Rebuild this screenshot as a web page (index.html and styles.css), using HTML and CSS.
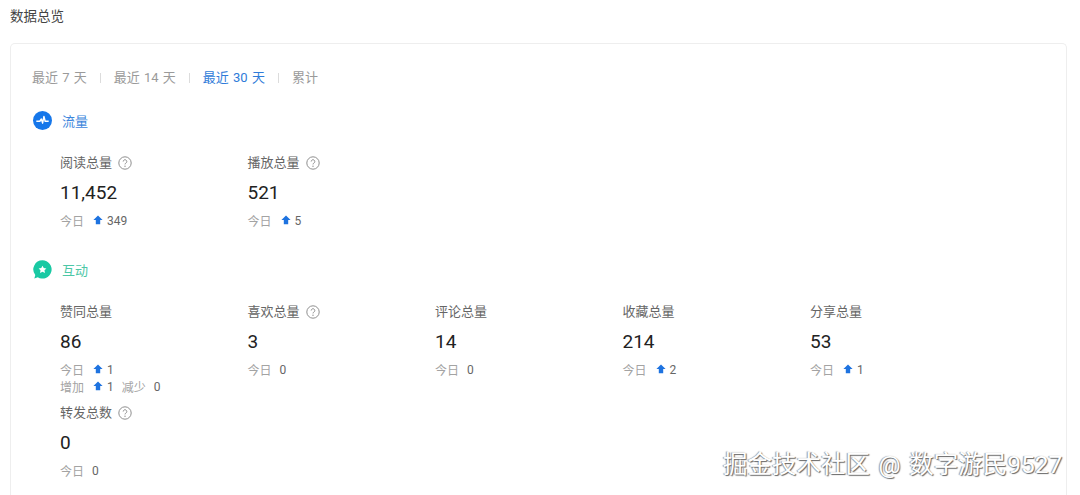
FILE: index.html
```html
<!DOCTYPE html>
<html lang="zh">
<head>
<meta charset="utf-8">
<title>数据总览</title>
<link rel="stylesheet" href="styles.css">
</head>
<body>
<svg class="defs" width="0" height="0" aria-hidden="true">
  <symbol id="help" viewBox="0 0 14 14"><circle cx="7" cy="7" r="6.2" fill="none" stroke="#8f8f8f"/><path d="M5.2 5.5a1.8 1.8 0 1 1 2.7 1.6c-.6.3-.9.6-.9 1.3" fill="none" stroke="#8f8f8f"/><circle cx="7" cy="10.2" r=".7" fill="#8f8f8f"/></symbol>
  <symbol id="up" viewBox="0 0 10 10"><path d="M5 .5 9.6 5H7.2v4.2H2.8V5H.4Z" fill="#1e73e0"/></symbol>
</svg>
<h1 class="page-title">数据总览</h1>
<main class="card">
  <nav class="tabs">
    <span class="tab">最近 7 天</span><i class="sep"></i>
    <span class="tab">最近 14 天</span><i class="sep"></i>
    <span class="tab active">最近 30 天</span><i class="sep"></i>
    <span class="tab">累计</span>
  </nav>

  <section class="group flow">
    <h2 class="group-head">
      <svg class="group-icon" viewBox="0 0 20 20"><circle cx="10" cy="10" r="10" fill="#1677ea"/><path d="M3.5 10.8H7.2L8.8 8.4l1.3 4.4L11.5 5.8l1.3 5h3.7" fill="none" stroke="#fff" stroke-width="1.5" stroke-linejoin="round"/></svg>
      流量
    </h2>
    <div class="stats">
      <div class="stat">
        <div class="label">阅读总量<svg class="help"><use href="#help"/></svg></div>
        <div class="value">11,452</div>
        <div class="delta"><span class="key">今日</span><svg class="up"><use href="#up"/></svg><span class="num">349</span></div>
      </div>
      <div class="stat">
        <div class="label">播放总量<svg class="help"><use href="#help"/></svg></div>
        <div class="value">521</div>
        <div class="delta"><span class="key">今日</span><svg class="up"><use href="#up"/></svg><span class="num">5</span></div>
      </div>
    </div>
  </section>

  <section class="group talk">
    <h2 class="group-head">
      <svg class="group-icon" viewBox="0 0 20 20"><path d="M10 .3a9.6 9.6 0 1 1-5 17.8L1.4 19.6l1-3.8A9.6 9.6 0 0 1 10 .3Z" fill="#19c9a3"/><path d="m10 6 1.3 2.5 2.8.4-2 2 .5 2.8-2.6-1.3-2.6 1.3.5-2.8-2-2 2.8-.4Z" fill="#fff"/></svg>
      互动
    </h2>
    <div class="stats">
      <div class="stat">
        <div class="label">赞同总量</div>
        <div class="value">86</div>
        <div class="delta"><span class="key">今日</span><svg class="up"><use href="#up"/></svg><span class="num">1</span></div>
        <div class="delta second"><span class="key">增加</span><svg class="up"><use href="#up"/></svg><span class="num">1</span><span class="key extra">减少</span><span class="num zero">0</span></div>
      </div>
      <div class="stat">
        <div class="label">喜欢总量<svg class="help"><use href="#help"/></svg></div>
        <div class="value">3</div>
        <div class="delta"><span class="key">今日</span><span class="num zero">0</span></div>
      </div>
      <div class="stat">
        <div class="label">评论总量</div>
        <div class="value">14</div>
        <div class="delta"><span class="key">今日</span><span class="num zero">0</span></div>
      </div>
      <div class="stat">
        <div class="label">收藏总量</div>
        <div class="value">214</div>
        <div class="delta"><span class="key">今日</span><svg class="up"><use href="#up"/></svg><span class="num">2</span></div>
      </div>
      <div class="stat">
        <div class="label">分享总量</div>
        <div class="value">53</div>
        <div class="delta"><span class="key">今日</span><svg class="up"><use href="#up"/></svg><span class="num">1</span></div>
      </div>
      <div class="stat repost">
        <div class="label">转发总数<svg class="help"><use href="#help"/></svg></div>
        <div class="value">0</div>
        <div class="delta"><span class="key">今日</span><span class="num zero">0</span></div>
      </div>
    </div>
  </section>
</main>
<div class="watermark">掘金技术社区 @ 数字游民9527</div>
</body>
</html>
```
FILE: styles.css
```css
html, body {
  margin: 0;
  height: 495px;
  overflow: hidden;
  background: #fff;
}
body {
  position: relative;
  font-family: Roboto, "Noto Sans CJK SC", sans-serif;
  color: #1f1f1f;
}
.defs { position: absolute; }
.page-title {
  margin: 0;
  padding: 7px 0 0 10px;
  height: 43px;
  box-sizing: border-box;
  font-size: 13.5px;
  line-height: 18px;
  font-weight: 400;
  color: #444;
}
.card {
  margin: 0 13px 0 10px;
  padding: 22px 21px 0;
  height: 452px;
  box-sizing: border-box;
  border: 1px solid #eeeeee;
  border-bottom: none;
  border-radius: 5px 5px 0 0;
}
.tabs {
  display: flex;
  align-items: center;
  height: 20px;
  font-size: 13px;
  word-spacing: 1px;
  color: #9a9a9a;
}
.tab.active { color: #2f7bd9; }
.sep {
  width: 1px;
  height: 10px;
  margin: 4px 13px 0;
  background: #dcdcdc;
}
.group-head {
  display: flex;
  align-items: center;
  gap: 10px;
  margin: 0;
  height: 20px;
  font-size: 13px;
  font-weight: 400;
}
.group-icon { width: 19px; height: 19px; margin-left: 1px; }
.flow { margin-top: 24px; }
.flow .group-head { color: #3d86dc; }
.talk { margin-top: 6px; }
.talk .group-head { color: #4cc7a6; }
.stats {
  display: grid;
  grid-template-columns: repeat(5, 187.5px);
  padding: 22px 0 0 28px;
}
.stat { min-height: 101px; }
.label {
  display: flex;
  align-items: center;
  gap: 6px;
  height: 18px;
  font-size: 13px;
  color: #666;
}
.help { width: 14px; height: 14px; margin-top: 3px; }
.value {
  margin-top: 10px;
  height: 26px;
  font-size: 19px;
  line-height: 26px;
  color: #222;
}
.delta {
  display: flex;
  align-items: center;
  margin-top: 5px;
  height: 18px;
  font-size: 12px;
  color: #666;
}
.delta.second { margin-top: 0; height: 16px; }
.key { color: #a3a3a3; }
.num { position: relative; top: 1px; }
.up { width: 10px; height: 10px; margin: 0 4px 0 9px; }
.zero { margin-left: 8px; }
.extra { margin-left: 8px; }
.repost { min-height: 80px; }
.watermark {
  position: absolute;
  left: 723px;
  top: 447px;
  font-size: 24.5px;
  word-spacing: 2.5px;
  line-height: 36px;
  white-space: nowrap;
  color: #fff;
  text-shadow: 1px 1px 1px #666, -1px 0 1px #999;
}
```
